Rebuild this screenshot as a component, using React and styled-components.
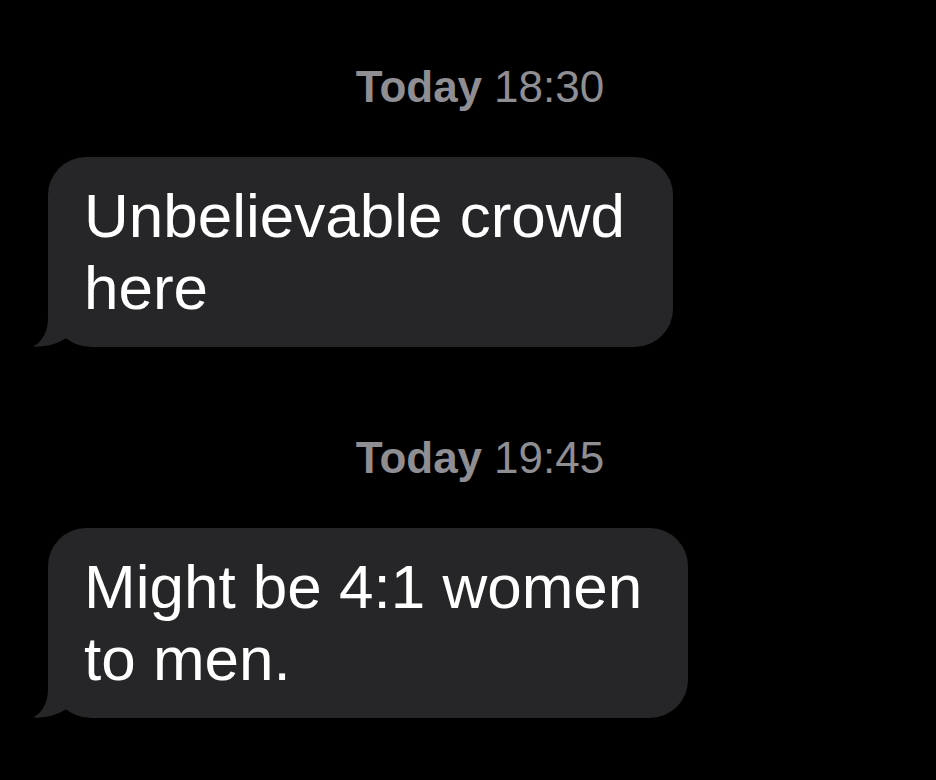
import React from "react";
import styled, { createGlobalStyle } from "styled-components";

const GlobalStyle = createGlobalStyle`
  html, body {
    margin: 0;
    padding: 0;
    background: #000000;
  }
  #root {
    min-height: 100vh;
    background: #000000;
  }
`;

const Page = styled.main`
  display: flex;
  flex-direction: column;
  gap: 86px;
  padding-top: 62px;
  font-family: "Liberation Sans", Arial, Helvetica, sans-serif;
`;

const Group = styled.section`
  display: flex;
  flex-direction: column;
  gap: 45px;
`;

const Timestamp = styled.div`
  display: flex;
  justify-content: center;
  gap: 12px;
  padding-left: 24px;
  font-size: 44px;
  line-height: 50px;
  color: #8e8e93;
`;

const Day = styled.span`
  font-weight: 700;
`;

const Time = styled.span`
  font-weight: 400;
`;

const Row = styled.div`
  display: flex;
  padding-left: 48px;
`;

const Bubble = styled.div`
  position: relative;
  box-sizing: border-box;
  width: ${(p) => p.$width}px;
  padding: 23px 20px 23px 36px;
  background: #262628;
  color: #ffffff;
  font-size: 62px;
  line-height: 72px;
  border-radius: 38px 38px 38px 44px;
`;

const Tail = styled.svg`
  position: absolute;
  left: -16px;
  bottom: 0;
  width: 40px;
  height: 50px;
  display: block;
`;

const BubbleTail = () => (
  <Tail viewBox="0 0 40 50" aria-hidden="true">
    <path
      d="M16 3 L16 21 C16 35 10 45 1 49.6 C13 50.2 25 47 34.5 41 L38 3 Z"
      fill="#262628"
    />
  </Tail>
);

const messages = [
  { day: "Today", time: "18:30", text: "Unbelievable crowd here", width: 625 },
  { day: "Today", time: "19:45", text: "Might be 4:1 women to men.", width: 640 },
];

export default function App() {
  return (
    <>
      <GlobalStyle />
      <Page>
        {messages.map((m) => (
          <Group key={m.time}>
            <Timestamp>
              <Day>{m.day}</Day>
              <Time>{m.time}</Time>
            </Timestamp>
            <Row>
              <Bubble $width={m.width}>
                {m.text}
                <BubbleTail />
              </Bubble>
            </Row>
          </Group>
        ))}
      </Page>
    </>
  );
}
